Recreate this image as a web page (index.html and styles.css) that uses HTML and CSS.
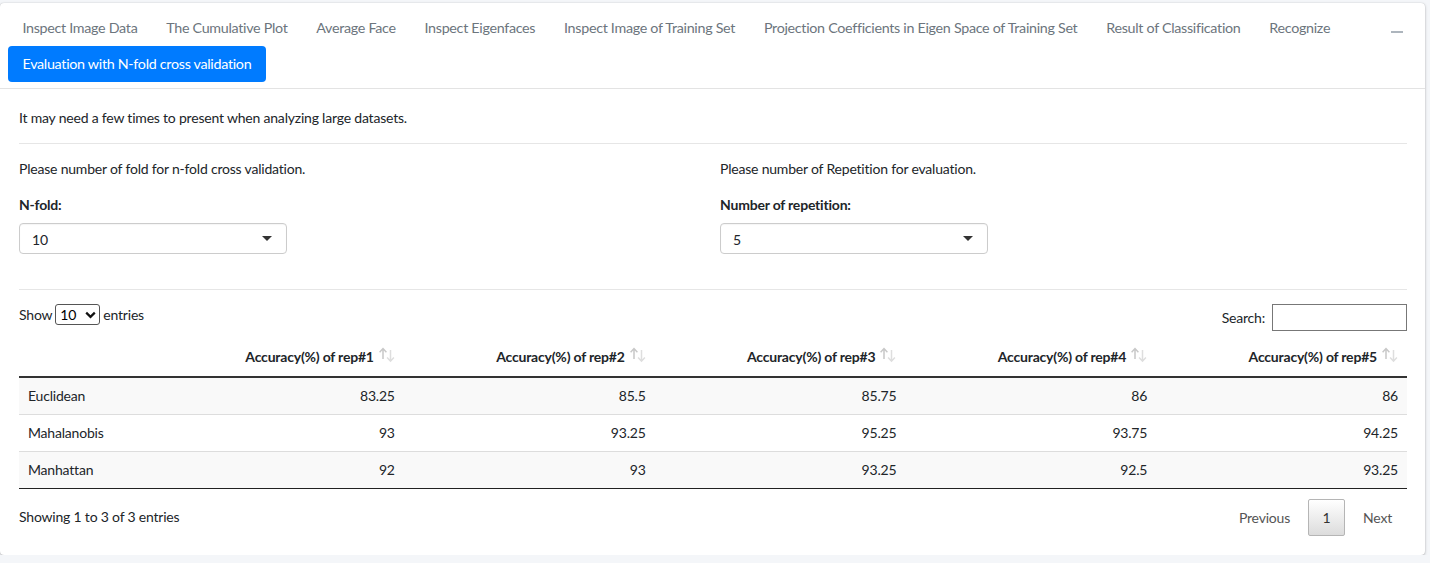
FILE: index.html
```html
<!DOCTYPE html>
<html>
<head>
<meta charset="utf-8">
<link rel="stylesheet" href="styles.css">
</head>
<body>
<div class="card">
  <div class="card-header">
    <ul class="tabs">
      <li class="tab">Inspect Image Data</li>
      <li class="tab">The Cumulative Plot</li>
      <li class="tab">Average Face</li>
      <li class="tab">Inspect Eigenfaces</li>
      <li class="tab">Inspect Image of Training Set</li>
      <li class="tab">Projection Coefficients in Eigen Space of Training Set</li>
      <li class="tab">Result of Classification</li>
      <li class="tab">Recognize</li>
      <li class="tab active">Evaluation with N-fold cross validation</li>
    </ul>
    <button class="minimize" aria-label="minimize"><span class="bar"></span></button>
  </div>
  <div class="card-body">
    <p class="note">It may need a few times to present when analyzing large datasets.</p>
    <hr class="rule">
    <div class="row">
      <div class="col">
        <p class="help">Please number of fold for n-fold cross validation.</p>
        <label class="lbl">N-fold:</label>
        <div class="select"><span>10</span><span class="caret"></span></div>
      </div>
      <div class="col">
        <p class="help">Please number of Repetition for evaluation.</p>
        <label class="lbl">Number of repetition:</label>
        <div class="select"><span>5</span><span class="caret"></span></div>
      </div>
    </div>
    <hr class="rule rule2">
    <div class="dt-top">
      <div class="length">Show <span class="len-select">10 <svg width="11" height="8" viewBox="0 0 11 8"><path d="M1.2 1.6 L5.5 5.9 L9.8 1.6" fill="none" stroke="#111" stroke-width="2.2"/></svg></span> entries</div>
      <div class="search">Search: <span class="search-box"></span></div>
    </div>
    <table class="dt">
      <thead>
        <tr>
          <th class="first"></th>
          <th>Accuracy(%) of rep#1<svg class="sort" width="18" height="16" viewBox="0 0 18 16"><path d="M5 12 V2 M1.6 5.2 L5 1.6 L8.4 5.2" fill="none" stroke="#c8c8c8" stroke-width="1.5"/><path d="M12.5 3 V14 M9.1 10.6 L12.5 14.2 L15.9 10.6" fill="none" stroke="#dedede" stroke-width="1.5"/></svg></th>
          <th>Accuracy(%) of rep#2<svg class="sort" width="18" height="16" viewBox="0 0 18 16"><path d="M5 12 V2 M1.6 5.2 L5 1.6 L8.4 5.2" fill="none" stroke="#c8c8c8" stroke-width="1.5"/><path d="M12.5 3 V14 M9.1 10.6 L12.5 14.2 L15.9 10.6" fill="none" stroke="#dedede" stroke-width="1.5"/></svg></th>
          <th>Accuracy(%) of rep#3<svg class="sort" width="18" height="16" viewBox="0 0 18 16"><path d="M5 12 V2 M1.6 5.2 L5 1.6 L8.4 5.2" fill="none" stroke="#c8c8c8" stroke-width="1.5"/><path d="M12.5 3 V14 M9.1 10.6 L12.5 14.2 L15.9 10.6" fill="none" stroke="#dedede" stroke-width="1.5"/></svg></th>
          <th>Accuracy(%) of rep#4<svg class="sort" width="18" height="16" viewBox="0 0 18 16"><path d="M5 12 V2 M1.6 5.2 L5 1.6 L8.4 5.2" fill="none" stroke="#c8c8c8" stroke-width="1.5"/><path d="M12.5 3 V14 M9.1 10.6 L12.5 14.2 L15.9 10.6" fill="none" stroke="#dedede" stroke-width="1.5"/></svg></th>
          <th>Accuracy(%) of rep#5<svg class="sort" width="18" height="16" viewBox="0 0 18 16"><path d="M5 12 V2 M1.6 5.2 L5 1.6 L8.4 5.2" fill="none" stroke="#c8c8c8" stroke-width="1.5"/><path d="M12.5 3 V14 M9.1 10.6 L12.5 14.2 L15.9 10.6" fill="none" stroke="#dedede" stroke-width="1.5"/></svg></th>
        </tr>
      </thead>
      <tbody>
        <tr class="odd"><td class="name">Euclidean</td><td>83.25</td><td>85.5</td><td>85.75</td><td>86</td><td>86</td></tr>
        <tr><td class="name">Mahalanobis</td><td>93</td><td>93.25</td><td>95.25</td><td>93.75</td><td>94.25</td></tr>
        <tr class="odd"><td class="name">Manhattan</td><td>92</td><td>93</td><td>93.25</td><td>92.5</td><td>93.25</td></tr>
      </tbody>
    </table>
    <div class="dt-bottom">
      <div class="info">Showing 1 to 3 of 3 entries</div>
      <div class="paging">
        <span class="pg">Previous</span>
        <span class="pg current">1</span>
        <span class="pg">Next</span>
      </div>
    </div>
  </div>
</div>
</body>
</html>
```
FILE: styles.css
```css
* { box-sizing: border-box; }
html, body { margin: 0; padding: 0; }
body {
  background: #f4f6f9;
  font-family: Lato, "Source Sans Pro", "Liberation Sans", sans-serif;
  font-size: 14px;
  letter-spacing: -0.2px;
  color: #212529;
  padding-top: 3px;
}
.card {
  width: 1425px;
  height: 552px;
  background: #fff;
  border-radius: 4px;
  box-shadow: 0 0 1px rgba(0,0,0,.2), 0 1px 3px rgba(0,0,0,.25);
}
.card-header {
  display: flex;
  align-items: flex-start;
  justify-content: space-between;
  padding: 8px 0 8px 8px;
  border-bottom: 1px solid #e3e3e3;
  height: 86px;
}
.tabs {
  list-style: none;
  margin: 0;
  padding: 0;
  display: flex;
  flex-wrap: wrap;
  width: 1375px;
  row-gap: 1px;
}
.tab {
  font-size: 14.3px;
  letter-spacing: -0.3px;
  color: #6c757d;
  padding: 0 14.4px;
  line-height: 18px;
  height: 34px;
  display: flex;
  align-items: center;
  border-radius: 4px;
}
.tab.active {
  background: #007bff;
  color: #fff;
  height: 36px;
  padding: 0 14.5px;
}
.minimize {
  border: 0;
  background: transparent;
  padding: 0;
  margin: 19px 22px 0 0;
  width: 12px;
  height: 4px;
  display: flex;
  align-items: center;
}
.minimize .bar { display: block; width: 12px; height: 2px; background: #adb5bd; }
.card-body { padding: 19px 18px 0 19px; }
.note { margin: 0; line-height: 20px; }
.rule { border: 0; border-top: 1px solid #e6e6e6; margin: 15px 0 15px; }
.row { display: flex; gap: 14px; }
.col { flex: 1; }
.help { margin: 0 0 16px; line-height: 20px; }
.lbl { display: block; font-weight: 700; line-height: 20px; margin-bottom: 8px; }
.select {
  width: 268px;
  height: 31px;
  border: 1px solid #ccc;
  border-radius: 4px;
  display: flex;
  align-items: center;
  justify-content: space-between;
  padding: 2px 14px 0 12px;
  box-shadow: inset 0 1px 1px rgba(0,0,0,.04);
}
.caret {
  width: 0; height: 0;
  border-left: 5px solid transparent;
  border-right: 5px solid transparent;
  border-top: 5px solid #333;
  margin-top: -3px;
}
.rule2 { margin: 35px 0 14px; }
.dt-top { display: flex; justify-content: space-between; align-items: flex-start; height: 41px; }
.length { display: flex; align-items: center; gap: 3px; height: 21px; }
.len-select {
  display: inline-flex; align-items: center; justify-content: space-between;
  width: 45px; height: 21px; border: 1px solid #555; border-radius: 3px;
  padding: 0 3px 0 4px; color: #000;
}
.search { display: flex; align-items: center; gap: 7px; height: 27px; }
.search-box { display: inline-block; width: 135px; height: 27px; border: 1px solid #777; }
.dt { width: 100%; border-collapse: collapse; table-layout: fixed; }
.dt th {
  font-weight: 700;
  text-align: right;
  padding: 0 8px 10px 10px;
  height: 32px;
  border-bottom: 2px solid #333;
  vertical-align: middle;
  white-space: nowrap;
}
.dt th.first { width: 134px; }
.sort { vertical-align: -1px; margin-left: 4px; }
.dt td { text-align: right; padding: 0 9px; height: 37px; border-top: 1px solid #ddd; }
.dt tbody tr:first-child td { border-top: 0; }
.dt td.name { text-align: left; }
.dt tr.odd td { background: #f9f9f9; }
.dt tbody tr:last-child td { border-bottom: 1px solid #222; }
.dt-bottom { display: flex; justify-content: space-between; align-items: center; margin-top: 10px; }
.info { margin-top: -2px; }
.paging { display: flex; align-items: center; margin-right: 0; }
.pg { color: #555; padding: 0 18px; height: 37px; display: flex; align-items: center; }
.pg.current {
  padding: 0 14px;
  width: 37px; justify-content: center;
  border: 1px solid #b5b5b5; border-radius: 2px; color: #333;
  background: linear-gradient(#fff, #dcdcdc);
}
.pg:last-child { padding-right: 15px; }
```
